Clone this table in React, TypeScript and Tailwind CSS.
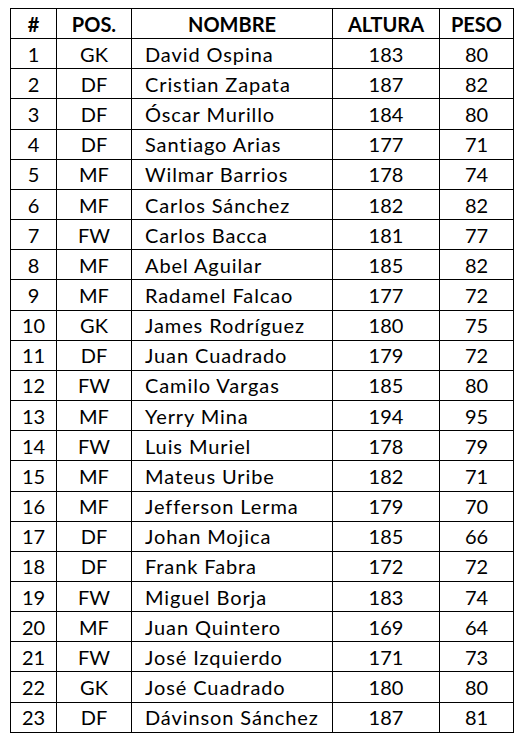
const players: [number, string, string, number, number][] = [
  [1, 'GK', 'David Ospina', 183, 80],
  [2, 'DF', 'Cristian Zapata', 187, 82],
  [3, 'DF', 'Óscar Murillo', 184, 80],
  [4, 'DF', 'Santiago Arias', 177, 71],
  [5, 'MF', 'Wilmar Barrios', 178, 74],
  [6, 'MF', 'Carlos Sánchez', 182, 82],
  [7, 'FW', 'Carlos Bacca', 181, 77],
  [8, 'MF', 'Abel Aguilar', 185, 82],
  [9, 'MF', 'Radamel Falcao', 177, 72],
  [10, 'GK', 'James Rodríguez', 180, 75],
  [11, 'DF', 'Juan Cuadrado', 179, 72],
  [12, 'FW', 'Camilo Vargas', 185, 80],
  [13, 'MF', 'Yerry Mina', 194, 95],
  [14, 'FW', 'Luis Muriel', 178, 79],
  [15, 'MF', 'Mateus Uribe', 182, 71],
  [16, 'MF', 'Jefferson Lerma', 179, 70],
  [17, 'DF', 'Johan Mojica', 185, 66],
  [18, 'DF', 'Frank Fabra', 172, 72],
  [19, 'FW', 'Miguel Borja', 183, 74],
  [20, 'MF', 'Juan Quintero', 169, 64],
  [21, 'FW', 'José Izquierdo', 171, 73],
  [22, 'GK', 'José Cuadrado', 180, 80],
  [23, 'DF', 'Dávinson Sánchez', 187, 81],
];

const cell = 'h-[30.17px] border border-black p-0 leading-none';

export default function App() {
  return (
    <div className="min-h-[742px] w-[526px] bg-white pt-2 pl-[10px] font-['Lato',sans-serif] text-[20px] text-black">
      <table className="table-fixed border-collapse">
        <colgroup>
          <col className="w-[46px]" />
          <col className="w-[75px]" />
          <col className="w-[201px]" />
          <col className="w-[107px]" />
          <col className="w-[74px]" />
        </colgroup>
        <thead>
          <tr className="font-bold">
            <th className={`${cell} text-center`}>#</th>
            <th className={`${cell} text-center`}>POS.</th>
            <th className={`${cell} text-center`}>NOMBRE</th>
            <th className={`${cell} text-center`}>ALTURA</th>
            <th className={`${cell} text-center`}>PESO</th>
          </tr>
        </thead>
        <tbody>
          {players.map(([n, pos, name, alt, peso]) => (
            <tr key={n}>
              <td className={`${cell} text-center`}>{n}</td>
              <td className={`${cell} text-center`}>{pos}</td>
              <td className={`${cell} pl-[13px] text-left tracking-[0.9px]`}>{name}</td>
              <td className={`${cell} text-center`}>{alt}</td>
              <td className={`${cell} text-center`}>{peso}</td>
            </tr>
          ))}
        </tbody>
      </table>
    </div>
  );
}
